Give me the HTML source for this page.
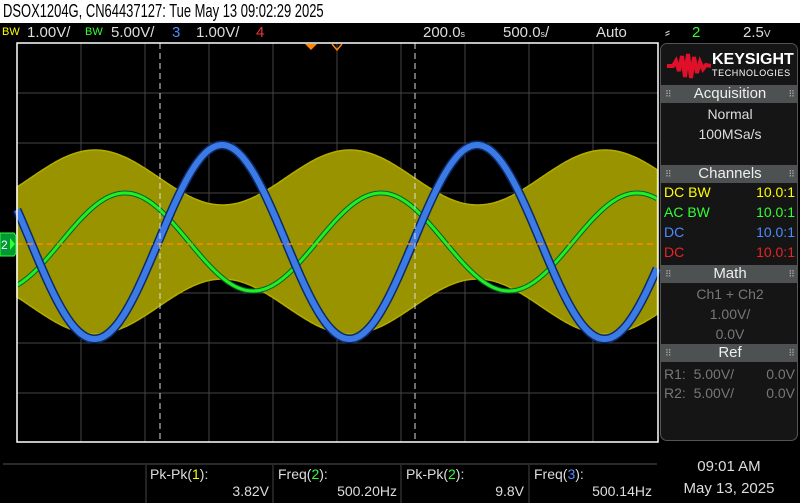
<!DOCTYPE html>
<html><head><meta charset="utf-8"><style>
*{margin:0;padding:0;box-sizing:border-box}
body{width:800px;height:503px;background:#000;overflow:hidden;position:relative;font-family:"Liberation Sans Narrow","Liberation Sans",sans-serif;color:#ddd}
.a{position:absolute;white-space:nowrap}
#title{left:0;top:0;width:800px;height:23px;background:#fff;color:#000;font-size:18px;line-height:23px;padding-left:3px}
#title span{display:inline-block;transform:scaleX(0.72);transform-origin:0 50%}
.st{top:23px;font-size:15px;line-height:19px;color:#ddd}
.panel{position:absolute;left:660px;top:43px;width:138px;height:398px;background:#151515;border:1px solid #555;border-radius:7px;overflow:hidden}
.hd{position:absolute;left:0;width:138px;height:18px;background:#4e5152;color:#eee;text-align:center;font-size:15px;line-height:18px}
.hd:before,.hd:after{content:"⠿";position:absolute;top:0;font-size:9px;color:#aaa}
.hd:before{left:4px}.hd:after{right:4px}
.r{position:absolute;left:3px;width:131px;font-size:14px;line-height:18px}
.r span{float:right}
.c{position:absolute;left:0;width:138px;text-align:center;font-size:14px;line-height:18px}
.m{font-size:14px;color:#ddd;top:0}
</style></head><body>
<div id="title" class="a"><span>DSOX1204G, CN64437127: Tue May 13 09:02:29 2025</span></div>
<div class="a st" style="left:2px;color:#ff0;font-size:11px">BW</div>
<div class="a st" style="left:27px">1.00V/</div>
<div class="a st" style="left:85px;color:#3f3;font-size:11px">BW</div>
<div class="a st" style="left:111px">5.00V/</div>
<div class="a st" style="left:172px;color:#4a8cff">3</div>
<div class="a st" style="left:196px">1.00V/</div>
<div class="a st" style="left:256px;color:#e33">4</div>
<div class="a st" style="left:423px">200.0<span style="font-size:9px">s</span></div>
<div class="a st" style="left:503px">500.0<span style="font-size:9px">s</span>/</div>
<div class="a st" style="left:596px">Auto</div>
<div class="a st" style="left:665px">⸗</div>
<div class="a st" style="left:692px;color:#3f3">2</div>
<div class="a st" style="left:743px">2.5<span style="font-size:10px">V</span></div>

<svg class="a" style="left:0;top:0" width="800" height="503" id="sv">
<g stroke="#444" stroke-width="1" id="grid"></g>
<path id="yel" fill="#9a9300" stroke="#b4ad00" stroke-width="1.5"/>
<path id="grn" fill="none" stroke="#063" stroke-width="5"/>
<path id="grn2" fill="none" stroke="#2e2" stroke-width="3"/>
<path id="blu" fill="none" stroke="#0a2a6a" stroke-width="9"/>
<path id="blu2" fill="none" stroke="#3c7ae6" stroke-width="6"/>
<line x1="17" y1="244" x2="657" y2="244" stroke="#f80" stroke-width="1.5" stroke-dasharray="6,4"/>
<line x1="160" y1="43" x2="160" y2="442" stroke="#ddd" stroke-width="1" stroke-dasharray="6,4"/>
<line x1="415" y1="43" x2="415" y2="442" stroke="#ddd" stroke-width="1" stroke-dasharray="6,4"/>
<rect x="17" y="43" width="641" height="399" fill="none" stroke="#fff" stroke-width="1.5"/>
<polygon points="305,44 317,44 311,50" fill="#f80"/>
<polyline points="332,44 337,50 342,44" fill="none" stroke="#f80" stroke-width="1.5"/>
<path d="M0,233 H14 L16,236 V253 L14,256 H0Z" fill="#093" stroke="#3f3" stroke-width="1"/>
<text x="1" y="249" fill="#fff" font-size="12" font-family="Liberation Sans">2</text>
<polygon points="10,238 15,244 10,250" fill="#3f3"/>
<line x1="3" y1="464" x2="657" y2="464" stroke="#555"/>
<g stroke="#444"><line x1="146" y1="465" x2="146" y2="503"/><line x1="273" y1="465" x2="273" y2="503"/><line x1="401" y1="465" x2="401" y2="503"/><line x1="529" y1="465" x2="529" y2="503"/></g>
</svg>

<div class="panel">
 <div class="a" style="left:0;top:0;width:138px;height:40px;background:#151515"></div>
 <svg class="a" style="left:6px;top:9px" width="44" height="26"><path d="M0,13 L6,13 L9,8 L12,18 L15,3 L18,24 L21,1 L24,25 L27,4 L30,20 L33,9 L36,16 L39,12 L44,13" fill="none" stroke="#e0102a" stroke-width="4"/></svg>
 <div class="a" style="left:51px;top:7px;font-family:'Liberation Sans';font-weight:bold;font-size:16px;color:#fff">KEYSIGHT</div>
 <div class="a" style="left:51px;top:24px;font-family:'Liberation Sans';font-size:9px;color:#fff;letter-spacing:0.6px">TECHNOLOGIES</div>
 <div class="hd" style="top:41px">Acquisition</div>
 <div class="c" style="top:61px;color:#ddd">Normal</div>
 <div class="c" style="top:81px;color:#ddd">100MSa/s</div>
 <div class="hd" style="top:121px">Channels</div>
 <div class="r" style="top:139px;color:#ff0">DC BW<span>10.0:1</span></div>
 <div class="r" style="top:159px;color:#3f3">AC BW<span>10.0:1</span></div>
 <div class="r" style="top:179px;color:#4a8cff">DC<span>10.0:1</span></div>
 <div class="r" style="top:199px;color:#e22">DC<span>10.0:1</span></div>
 <div class="hd" style="top:221px">Math</div>
 <div class="c" style="top:241px;color:#777">Ch1 + Ch2</div>
 <div class="c" style="top:261px;color:#777">1.00V/</div>
 <div class="c" style="top:281px;color:#777">0.0V</div>
 <div class="hd" style="top:300px">Ref</div>
 <div class="r" style="top:321px;color:#777">R1:&nbsp; 5.00V/<span>0.0V</span></div>
 <div class="r" style="top:340px;color:#777">R2:&nbsp; 5.00V/<span>0.0V</span></div>
</div>

<div class="a m" style="left:150px;top:466px">Pk-Pk(<span style="color:#ff0">1</span>):</div>
<div class="a m" style="left:195px;top:483px;width:74px;text-align:right">3.82V</div>
<div class="a m" style="left:278px;top:466px">Freq(<span style="color:#3f3">2</span>):</div>
<div class="a m" style="left:300px;top:483px;width:97px;text-align:right">500.20Hz</div>
<div class="a m" style="left:406px;top:466px">Pk-Pk(<span style="color:#3f3">2</span>):</div>
<div class="a m" style="left:450px;top:483px;width:74px;text-align:right">9.8V</div>
<div class="a m" style="left:534px;top:466px">Freq(<span style="color:#4a8cff">3</span>):</div>
<div class="a m" style="left:555px;top:483px;width:97px;text-align:right">500.14Hz</div>
<div class="a m" style="left:670px;top:458px;width:118px;text-align:center;font-size:15px">09:01 AM</div>
<div class="a m" style="left:670px;top:480px;width:118px;text-align:center;font-size:15px">May 13, 2025</div>

<script>
(function(){
var g=document.getElementById('grid'),s='';
for(var i=1;i<10;i++){var x=17+64*i;s+='<line x1="'+x+'" y1="43" x2="'+x+'" y2="442"/>';}
for(var j=1;j<8;j++){var y=43+50*j;s+='<line x1="17" y1="'+y+'" x2="658" y2="'+y+'"/>';}
g.innerHTML=s;
var P=2*Math.PI,tp='',bot=[],bl='',gr='';
for(var x=17;x<=657;x+=1){
 var a=64.5+27.5*Math.cos(P*(x-95)/255);
 tp+=(x==17?'M':'L')+x+','+(242-a).toFixed(1);
 bot.push(x+','+(242+a).toFixed(1));
 bl+=(x==17?'M':'L')+x+','+(242-97*Math.cos(P*(x-222)/255)).toFixed(1);
 gr+=(x==17?'M':'L')+x+','+(242-49*Math.cos(P*(x-125)/256)).toFixed(1);
}
document.getElementById('yel').setAttribute('d',tp+'L'+bot.reverse().join('L')+'Z');
['grn','grn2'].forEach(function(i){document.getElementById(i).setAttribute('d',gr)});
['blu','blu2'].forEach(function(i){document.getElementById(i).setAttribute('d',bl)});
})();
</script>
</body></html>
